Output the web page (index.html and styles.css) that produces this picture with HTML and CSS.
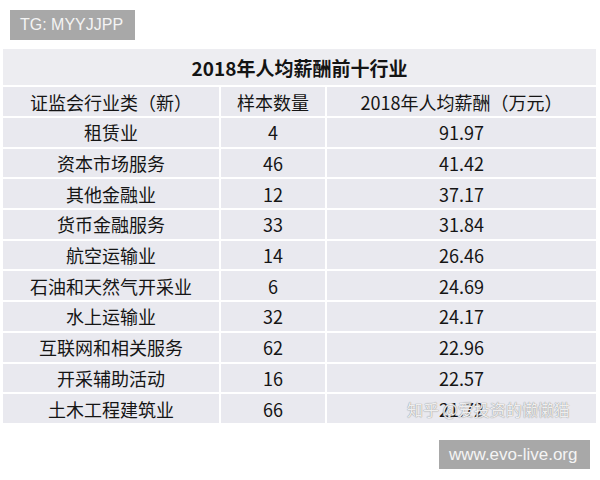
FILE: index.html
```html
<!DOCTYPE html>
<html lang="zh">
<head>
<meta charset="utf-8">
<link rel="stylesheet" href="styles.css">
</head>
<body>
<div class="page">
  <div class="tag">TG: MYYJJPP</div>
  <div class="table-wrap">
    <div class="grid">
      <div class="cell title">2018年人均薪酬前十行业</div>
      <div class="cell head">证监会行业类（新）</div>
      <div class="cell head">样本数量</div>
      <div class="cell head">2018年人均薪酬（万元）</div>

      <div class="cell">租赁业</div><div class="cell num">4</div><div class="cell num">91.97</div>
      <div class="cell">资本市场服务</div><div class="cell num">46</div><div class="cell num">41.42</div>
      <div class="cell">其他金融业</div><div class="cell num">12</div><div class="cell num">37.17</div>
      <div class="cell">货币金融服务</div><div class="cell num">33</div><div class="cell num">31.84</div>
      <div class="cell">航空运输业</div><div class="cell num">14</div><div class="cell num">26.46</div>
      <div class="cell">石油和天然气开采业</div><div class="cell num">6</div><div class="cell num">24.69</div>
      <div class="cell">水上运输业</div><div class="cell num">32</div><div class="cell num">24.17</div>
      <div class="cell">互联网和相关服务</div><div class="cell num">62</div><div class="cell num">22.96</div>
      <div class="cell">开采辅助活动</div><div class="cell num">16</div><div class="cell num">22.57</div>
      <div class="cell">土木工程建筑业</div><div class="cell num">66</div><div class="cell num">21.72</div>
    </div>
    <div class="watermark">知乎 @爱投资的懒懒猫</div>
  </div>
  <div class="footer">
    <div class="site">www.evo-live.org</div>
  </div>
</div>
</body>
</html>
```

FILE: styles.css
```css
html, body {
  margin: 0;
  padding: 0;
  background: #ffffff;
}

.page {
  width: 600px;
  height: 480px;
  display: flex;
  flex-direction: column;
  font-family: "Noto Sans CJK SC", "Noto Sans", sans-serif;
}

.tag {
  align-self: flex-start;
  margin: 10px 0 0 10px;
  height: 30px;
  width: 125px;
  box-sizing: border-box;
  padding-left: 10px;
  background: #a8a8a8;
  color: #f4f4f4;
  font-family: "Liberation Sans", Arial, sans-serif;
  font-size: 16px;
  line-height: 30px;
}

.table-wrap {
  position: relative;
  margin: 9px 0 0 3px;
  width: 593px;
}

.grid {
  display: grid;
  grid-template-columns: 216px 104px 269px;
  grid-template-rows: 36px 29px;
  grid-auto-rows: 28.7px;
  gap: 2px;
}

.cell {
  background: #e9e9ef;
  color: #151515;
  font-size: 18px;
  display: flex;
  align-items: center;
  justify-content: center;
  white-space: nowrap;
}

.cell.num {
  font-size: 18px;
}

.cell.title {
  grid-column: 1 / 4;
  background: #ededf1;
  font-weight: 700;
  font-size: 19px;
  color: #141414;
}

.watermark {
  position: absolute;
  left: 404px;
  top: 348px;
  font-size: 16px;
  color: rgba(255, 255, 255, 0.85);
  text-shadow: 0 0 1px #9a9a9a, 0 0 1px #9a9a9a;
  white-space: nowrap;
}

.footer {
  display: flex;
  justify-content: flex-end;
  margin-top: 17px;
  padding-right: 10px;
}

.site {
  width: 151px;
  height: 29px;
  box-sizing: border-box;
  padding-left: 10px;
  background: #a8a8a8;
  color: #f4f4f4;
  font-family: "Liberation Sans", Arial, sans-serif;
  font-size: 17px;
  line-height: 29px;
  white-space: nowrap;
}
```
